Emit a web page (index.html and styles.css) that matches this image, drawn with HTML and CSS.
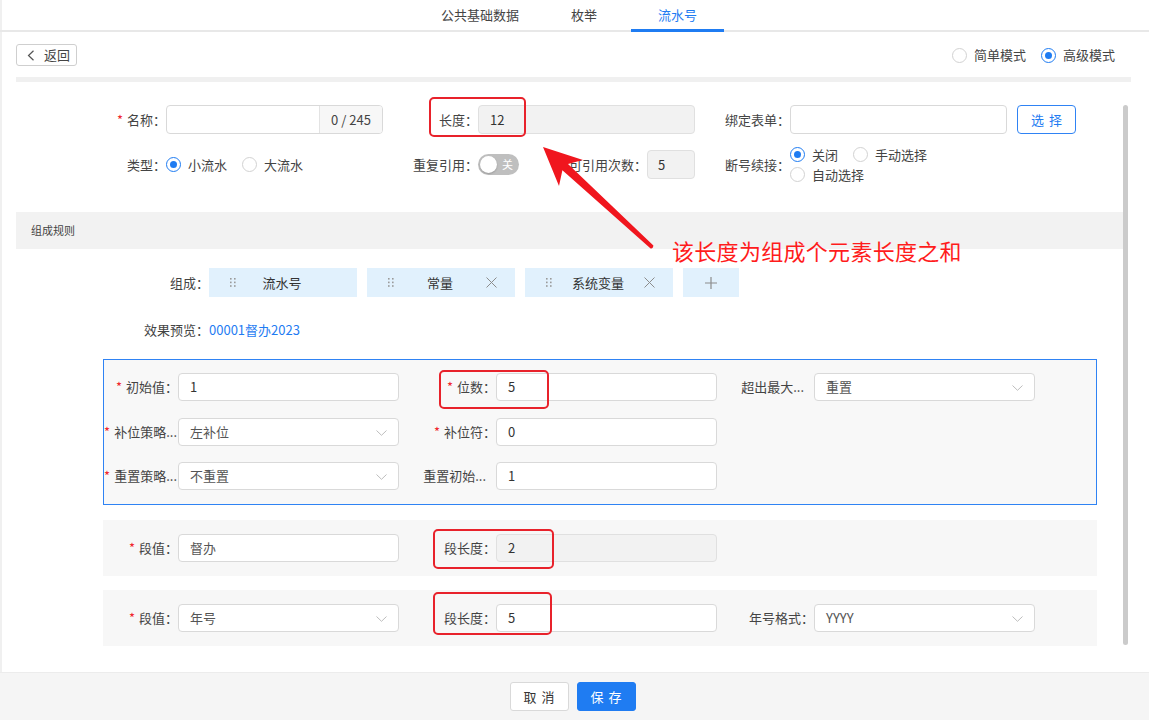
FILE: index.html
```html
<!DOCTYPE html>
<html lang="zh-CN">
<head>
<meta charset="utf-8">
<title>流水号</title>
<link rel="stylesheet" href="styles.css">
</head>
<body>
<div class="app">
  <nav class="tabs">
    <div class="tab">公共基础数据</div>
    <div class="tab">枚举</div>
    <div class="tab active">流水号</div>
  </nav>

  <div class="toolbar">
    <button class="back"><svg class="back-ico" width="8" height="11" viewBox="0 0 8 11"><path d="M6.5 0.8 L1.5 5.5 L6.5 10.2" fill="none" stroke="#555" stroke-width="1.2"/></svg><span>返回</span></button>
    <div class="modes">
      <span class="radio"><span class="dot"></span>简单模式</span>
      <span class="radio on"><span class="dot"></span>高级模式</span>
    </div>
  </div>
  <div class="divider"></div>

  <main class="content">
    <section class="basic">
      <div class="frow r1">
        <div class="fld fa">
          <label class="lb"><i class="req">*</i>名称：</label>
          <div class="inp grp"><span class="grp-in"></span><span class="suffix">0 / 245</span></div>
        </div>
        <div class="fld fb">
          <label class="lb">长度：</label>
          <div class="inp dis">12</div>
        </div>
        <div class="fld fc">
          <label class="lb">绑定表单：</label>
          <div class="inp"></div>
          <button class="btn-outline">选 择</button>
        </div>
      </div>
      <div class="frow r2">
        <div class="fld fa">
          <label class="lb">类型：</label>
          <div class="radios">
            <span class="radio on"><span class="dot"></span>小流水</span>
            <span class="radio"><span class="dot"></span>大流水</span>
          </div>
        </div>
        <div class="fld fb">
          <label class="lb">重复引用：</label>
          <span class="switch"><span class="knob"></span><span class="sw-t">关</span></span>
          <label class="lb lb-count">可引用次数：</label>
          <div class="inp dis small">5</div>
        </div>
        <div class="fld fc">
          <label class="lb">断号续接：</label>
          <div class="radios wrap">
            <span class="radio on"><span class="dot"></span>关闭</span>
            <span class="radio"><span class="dot"></span>手动选择</span>
            <span class="radio"><span class="dot"></span>自动选择</span>
          </div>
        </div>
      </div>
    </section>

    <div class="sec-head">组成规则</div>

    <div class="line compose">
      <label class="lb lb-wide">组成：</label>
      <div class="chips">
        <div class="chip">
          <svg class="handle" width="6" height="9" viewBox="0 0 6 9"><g fill="#9a9a9a"><rect x="0" y="0" width="1.6" height="1.6"/><rect x="4" y="0" width="1.6" height="1.6"/><rect x="0" y="3.6" width="1.6" height="1.6"/><rect x="4" y="3.6" width="1.6" height="1.6"/><rect x="0" y="7.2" width="1.6" height="1.6"/><rect x="4" y="7.2" width="1.6" height="1.6"/></g></svg>
          <span class="chip-t">流水号</span>
          <span class="close ghost"></span>
        </div>
        <div class="chip">
          <svg class="handle" width="6" height="9" viewBox="0 0 6 9"><g fill="#9a9a9a"><rect x="0" y="0" width="1.6" height="1.6"/><rect x="4" y="0" width="1.6" height="1.6"/><rect x="0" y="3.6" width="1.6" height="1.6"/><rect x="4" y="3.6" width="1.6" height="1.6"/><rect x="0" y="7.2" width="1.6" height="1.6"/><rect x="4" y="7.2" width="1.6" height="1.6"/></g></svg>
          <span class="chip-t">常量</span>
          <svg class="close" width="11" height="11" viewBox="0 0 11 11"><path d="M0.5 0.5 L10.5 10.5 M10.5 0.5 L0.5 10.5" stroke="#8c8c8c" stroke-width="1"/></svg>
        </div>
        <div class="chip">
          <svg class="handle" width="6" height="9" viewBox="0 0 6 9"><g fill="#9a9a9a"><rect x="0" y="0" width="1.6" height="1.6"/><rect x="4" y="0" width="1.6" height="1.6"/><rect x="0" y="3.6" width="1.6" height="1.6"/><rect x="4" y="3.6" width="1.6" height="1.6"/><rect x="0" y="7.2" width="1.6" height="1.6"/><rect x="4" y="7.2" width="1.6" height="1.6"/></g></svg>
          <span class="chip-t">系统变量</span>
          <svg class="close" width="11" height="11" viewBox="0 0 11 11"><path d="M0.5 0.5 L10.5 10.5 M10.5 0.5 L0.5 10.5" stroke="#8c8c8c" stroke-width="1"/></svg>
        </div>
        <div class="chip add">
          <svg width="12" height="12" viewBox="0 0 12 12"><path d="M6 0 V12 M0 6 H12" stroke="#8c8c8c" stroke-width="1.2"/></svg>
        </div>
      </div>
    </div>

    <div class="line preview">
      <label class="lb lb-wide">效果预览：</label>
      <span class="pv">00001督办2023</span>
    </div>

    <div class="panel selected">
      <div class="prow">
        <div class="pf c1"><label class="lb"><i class="req">*</i>初始值：</label><div class="inp">1</div></div>
        <div class="pf c2"><label class="lb"><i class="req">*</i>位数：</label><div class="inp">5</div></div>
        <div class="pf c3"><label class="lb trunc">超出最大...</label><div class="inp sel">重置<svg class="chev" width="11" height="6" viewBox="0 0 11 6"><path d="M0.5 0.5 L5.5 5.3 L10.5 0.5" fill="none" stroke="#bdbdbd" stroke-width="1"/></svg></div></div>
      </div>
      <div class="prow">
        <div class="pf c1"><label class="lb trunc1"><i class="req">*</i>补位策略...</label><div class="inp sel">左补位<svg class="chev" width="11" height="6" viewBox="0 0 11 6"><path d="M0.5 0.5 L5.5 5.3 L10.5 0.5" fill="none" stroke="#bdbdbd" stroke-width="1"/></svg></div></div>
        <div class="pf c2"><label class="lb"><i class="req">*</i>补位符：</label><div class="inp">0</div></div>
      </div>
      <div class="prow">
        <div class="pf c1"><label class="lb trunc1"><i class="req">*</i>重置策略...</label><div class="inp sel">不重置<svg class="chev" width="11" height="6" viewBox="0 0 11 6"><path d="M0.5 0.5 L5.5 5.3 L10.5 0.5" fill="none" stroke="#bdbdbd" stroke-width="1"/></svg></div></div>
        <div class="pf c2"><label class="lb trunc">重置初始...</label><div class="inp">1</div></div>
      </div>
    </div>

    <div class="panel">
      <div class="prow">
        <div class="pf c1"><label class="lb"><i class="req">*</i>段值：</label><div class="inp muted">督办</div></div>
        <div class="pf c2"><label class="lb">段长度：</label><div class="inp dis">2</div></div>
      </div>
    </div>

    <div class="panel">
      <div class="prow">
        <div class="pf c1"><label class="lb"><i class="req">*</i>段值：</label><div class="inp sel">年号<svg class="chev" width="11" height="6" viewBox="0 0 11 6"><path d="M0.5 0.5 L5.5 5.3 L10.5 0.5" fill="none" stroke="#bdbdbd" stroke-width="1"/></svg></div></div>
        <div class="pf c2"><label class="lb">段长度：</label><div class="inp">5</div></div>
        <div class="pf c3"><label class="lb">年号格式：</label><div class="inp sel">YYYY<svg class="chev" width="11" height="6" viewBox="0 0 11 6"><path d="M0.5 0.5 L5.5 5.3 L10.5 0.5" fill="none" stroke="#bdbdbd" stroke-width="1"/></svg></div></div>
      </div>
    </div>

    <div class="scrollbar"></div>
  </main>

  <footer class="footer">
    <button class="btn">取 消</button>
    <button class="btn primary">保 存</button>
  </footer>

  <div class="annot">
    <svg class="annot-svg" width="1149" height="720" viewBox="0 0 1149 720">
      <g fill="none" stroke="#e8222b" stroke-width="2">
        <rect x="430" y="98" width="95" height="38" rx="4"/>
        <rect x="440" y="371" width="108" height="37" rx="4"/>
        <rect x="434" y="530" width="119" height="38" rx="4"/>
        <rect x="434" y="593" width="117" height="41" rx="4"/>
      </g>
      <path d="M543 147 L583 160 L568 164 L653.4 245.5 Q653 249 650.6 248.5 L562.4 170.2 L559 186 Z" fill="#f0161e"/>
    </svg>
    <div class="annot-text">该长度为组成个元素长度之和</div>
  </div>
</div>
</body>
</html>
```
FILE: styles.css
```css
* { box-sizing: border-box; }
html, body { margin: 0; padding: 0; }
body {
  width: 1149px;
  height: 720px;
  overflow: hidden;
  background: #fff;
  font-family: "Noto Sans CJK SC", "Noto Sans", "Liberation Sans", sans-serif;
  font-size: 13px;
  color: #333;
}
button { font-family: inherit; font-size: 13px; cursor: pointer; }

.app {
  position: relative;
  height: 720px;
  display: flex;
  flex-direction: column;
  box-shadow: inset 2px 0 0 #f0f0f0;
}

/* tabs */
.tabs {
  flex-shrink: 0;
  height: 32px;
  display: flex;
  padding-left: 415px;
  box-shadow: inset 0 -2px 0 #e8e8e8;
}
.tab {
  height: 32px;
  padding: 0 26px;
  line-height: 30px;
  color: #444;
}
.tab.active {
  margin-left: 8px;
  padding: 0 27px;
  color: #1f7cf2;
  border-bottom: 3px solid #1f7cf2;
}

/* toolbar */
.toolbar {
  flex-shrink: 0;
  display: flex;
  justify-content: space-between;
  align-items: center;
  padding: 12px 34px 0 16px;
}
.back {
  display: flex;
  align-items: center;
  height: 22px;
  width: 61px;
  padding: 0 0 0 10px;
  background: #fff;
  border: 1px solid #cfcfcf;
  border-radius: 3px;
  color: #444;
  line-height: 20px;
}
.back-ico { margin-right: 9px; }
.modes { display: flex; gap: 15px; }

.divider {
  flex-shrink: 0;
  height: 5px;
  margin: 11px 18px 0 16px;
  background: #f0f0f0;
}

/* radios */
.radio {
  display: inline-flex;
  align-items: center;
  color: #444;
  line-height: 20px;
  white-space: nowrap;
}
.radio .dot {
  width: 15px;
  height: 15px;
  border: 1px solid #d2d2d2;
  border-radius: 50%;
  margin-right: 7px;
  background: #fff;
  position: relative;
  flex-shrink: 0;
}
.radio.on .dot { border-color: #1f7cf2; }
.radio.on .dot::after {
  content: "";
  position: absolute;
  left: 3px;
  top: 3px;
  width: 7px;
  height: 7px;
  border-radius: 50%;
  background: #1f7cf2;
}

/* main content */
.content {
  flex: 1;
  position: relative;
  overflow: hidden;
}
.basic { padding: 23px 0 0 60px; }
.frow { display: flex; align-items: center; }
.r1 { height: 29px; }
.r2 { height: 35px; margin-top: 13px; }
.fld { display: flex; align-items: center; }
.fa { width: 323px; }
.fb { width: 312px; }
.lb {
  display: flex;
  justify-content: flex-end;
  align-items: center;
  white-space: nowrap;
  color: #444;
  line-height: 20px;
  flex-shrink: 0;
}
.req { font-style: normal; color: #f0262e; margin-right: 4px; }
.fa .lb { width: 106px; }
.fb .lb { width: 95px; }
.fc .lb { width: 95px; }
.fb .lb.lb-count { width: 128px; }

.inp {
  width: 217px;
  height: 29px;
  border: 1px solid #d9d9d9;
  border-radius: 4px;
  background: #fff;
  padding: 0 11px;
  line-height: 27px;
  color: #333;
  flex-shrink: 0;
  position: relative;
}
.inp.dis { background: #f2f2f2; border-color: #e0e0e0; }
.inp.small { width: 48px; padding: 0 10px; }
.grp { display: flex; padding: 0; overflow: hidden; }
.grp-in { flex: 1; }
.suffix {
  width: 63px;
  border-left: 1px solid #e3e3e3;
  background: #f7f7f7;
  text-align: center;
  color: #444;
}
.btn-outline {
  margin-left: 10px;
  width: 59px;
  height: 29px;
  border: 1px solid #2f83f4;
  border-radius: 4px;
  background: #fff;
  color: #1f7cf2;
  padding: 0;
  word-spacing: 2px;
}

.radios { display: flex; gap: 15px; }
.radios.wrap { width: 200px; flex-wrap: wrap; row-gap: 0; }

.switch {
  position: relative;
  width: 41px;
  height: 21px;
  border-radius: 11px;
  background: #bfbfbf;
  flex-shrink: 0;
}
.knob {
  position: absolute;
  left: 2px;
  top: 2px;
  width: 17px;
  height: 17px;
  border-radius: 50%;
  background: #fff;
  box-shadow: 0 1px 2px rgba(0,0,0,.2);
}
.sw-t {
  position: absolute;
  right: 6px;
  top: 0;
  line-height: 21px;
  font-size: 11px;
  color: #fff;
}

/* section header */
.sec-head {
  margin: 30px 21px 0 16px;
  height: 37px;
  background: #f2f2f2;
  padding-left: 15px;
  line-height: 37px;
  font-size: 11px;
  color: #444;
}

.line { display: flex; align-items: center; }
.lb-wide { width: 209px; }
.compose { margin-top: 19px; }
.chips { display: flex; gap: 10px; }
.chip {
  width: 148px;
  height: 29px;
  background: #e1f1fd;
  display: flex;
  align-items: center;
  padding: 0 18px 0 21px;
}
.chip-t { flex: 1; text-align: center; color: #333; }
.close { width: 11px; height: 11px; flex-shrink: 0; }
.ghost { display: inline-block; }
.handle { flex-shrink: 0; }
.chip.add { width: 56px; padding: 0; justify-content: center; }

.preview { margin-top: 23px; height: 20px; }
.pv { color: #1f7cf2; line-height: 20px; }

/* panels */
.panel {
  margin: 19px 0 0 103px;
  width: 994px;
  border: 1px solid transparent;
  background: #f7f7f7;
  padding: 13px 0 13px 0;
}
.panel + .panel { margin-top: 14px; }
.panel.selected { border-color: #2f83f4; padding-bottom: 14px; background: #f8f8f8; }
.panel.selected + .panel { margin-top: 15px; }
.prow { display: flex; height: 28px; align-items: center; }
.prow + .prow { margin-top: 16.5px; }
.pf { display: flex; align-items: center; }
.pf .inp { width: 221px; height: 28px; line-height: 26px; }
.pf.c1 .lb { width: 74px; }
.pf.c2 .lb, .pf.c3 .lb { width: 97px; }
.pf .lb.trunc { padding-right: 10px; }
.pf .lb.trunc1 { padding-right: 1px; }
.inp.sel { color: #555; }
.inp.muted { color: #555; }
.chev { position: absolute; right: 11px; top: 11px; }

.scrollbar {
  position: absolute;
  left: 1123px;
  top: 23px;
  width: 5px;
  height: 540px;
  border-radius: 3px;
  background: #cbcbcb;
}

/* footer */
.footer {
  flex-shrink: 0;
  height: 48px;
  background: #f5f5f5;
  border-top: 1px solid #ececec;
  display: flex;
  justify-content: center;
  gap: 8px;
  padding: 9px 4px 0 0;
}
.btn {
  width: 59px;
  height: 29px;
  border: 1px solid #d9d9d9;
  border-radius: 3px;
  background: #fff;
  color: #333;
  padding: 0;
  word-spacing: 2px;
}
.btn.primary { background: #1f7cf2; border-color: #1f7cf2; color: #fff; }

/* annotation overlay */
.annot {
  position: absolute;
  left: 0;
  top: 0;
  width: 1149px;
  height: 720px;
  pointer-events: none;
}
.annot-svg { position: absolute; left: 0; top: 0; }
.annot-text {
  position: absolute;
  left: 672px;
  top: 237px;
  font-size: 22px;
  line-height: 26px;
  letter-spacing: 0.3px;
  color: #ff1c1c;
  white-space: nowrap;
}
```
